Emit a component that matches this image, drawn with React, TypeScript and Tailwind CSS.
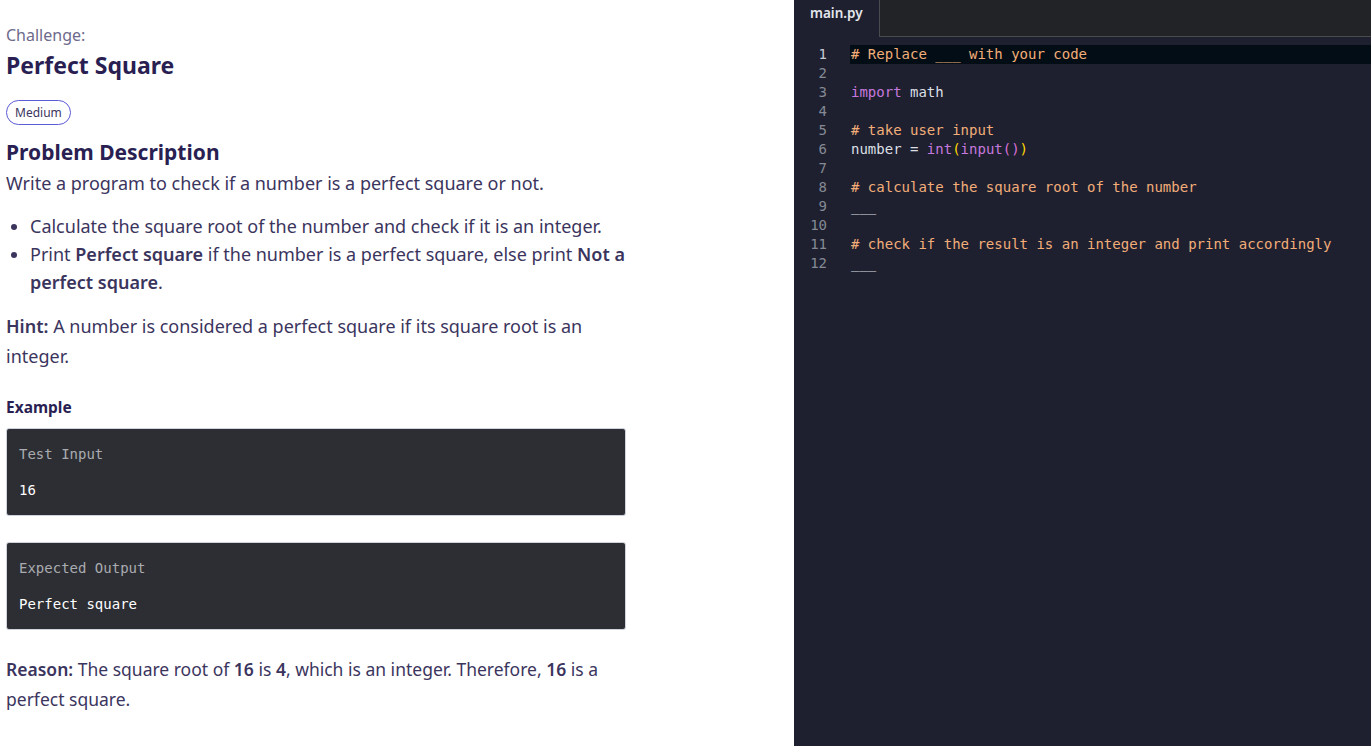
import React from "react";

const sans = { fontFamily: "'Noto Sans', Lato, sans-serif" };
const mono = { fontFamily: "'DejaVu Sans Mono', 'Liberation Mono', monospace" };

const C = "text-[#f2ad78]"; // comment
const K = "text-[#c679dd]"; // keyword / builtin
const T = "text-[#dcdfe4]"; // plain

type Tok = [string, string];

const lines: Tok[][] = [
  [["# Replace ___ with your code", C]],
  [],
  [["import", K], [" math", T]],
  [],
  [["# take user input", C]],
  [["number = ", T], ["int", K], ["(", "text-[#ffd700]"], ["input", K], ["()", "text-[#da70d6]"], [")", "text-[#ffd700]"]],
  [],
  [["# calculate the square root of the number", C]],
  [["___", T]],
  [],
  [["# check if the result is an integer and print accordingly", C]],
  [["___", T]],
];

function ExampleBox({ label, value }: { label: string; value: string }) {
  return (
    <div
      className="w-[620px] rounded-[3px] border border-[#cfd4dc] bg-[#2d2e33] px-[12px] pt-[15px] pb-[15px] text-[14px] leading-[20px]"
      style={mono}
    >
      <div className="text-[#a9abb0]">{label}</div>
      <div className="mt-[16px] text-white">{value}</div>
    </div>
  );
}

export default function App() {
  return (
    <div className="flex h-[746px] w-full overflow-hidden bg-white">
      {/* Problem statement */}
      <div className="w-[794px] shrink-0 px-[6px] pt-[23px] text-[#3b355e]" style={sans}>
        <div className="text-[16px] leading-[24px] text-[#6e6a8c]">Challenge:</div>
        <h1 className="mt-[2px] text-[23px] font-bold leading-[32px] text-[#2a1f52]">Perfect Square</h1>
        <span className="mt-[19px] inline-flex h-[25px] items-center rounded-full border border-[#5b5bd6] px-[8px] text-[12px] text-[#3b355e]">
          Medium
        </span>
        <h2 className="mt-[12px] text-[21px] font-bold leading-[30px] text-[#2a1f52]">Problem Description</h2>
        <p className="mt-[1px] text-[18px] leading-[30px]">
          Write a program to check if a number is a perfect square or not.
        </p>
        <ul className="mt-[14px] w-[650px] list-disc pl-[24px] text-[18px] leading-[28px]">
          <li>Calculate the square root of the number and check if it is an integer.</li>
          <li>
            Print <b className="font-semibold">Perfect square</b> if the number is a perfect square, else print{" "}
            <b className="font-semibold">Not a</b>
            <br />
            <b className="font-semibold">perfect square</b>.
          </li>
        </ul>
        <p className="mt-[15px] text-[18px] leading-[30px]">
          <b className="font-semibold">Hint:</b> A number is considered a perfect square if its square root is an
          <br />
          integer.
        </p>
        <div className="mt-[24px] text-[15.5px] font-bold leading-[24px] text-[#2a1f52]">Example</div>
        <div className="mt-[9px]">
          <ExampleBox label="Test Input" value="16" />
        </div>
        <div className="mt-[26px]">
          <ExampleBox label="Expected Output" value="Perfect square" />
        </div>
        <p className="mt-[24px] text-[17.5px] leading-[30px]">
          <b className="font-semibold">Reason:</b> The square root of <b className="font-semibold">16</b> is{" "}
          <b className="font-semibold">4</b>, which is an integer. Therefore, <b className="font-semibold">16</b> is a
          <br />
          perfect square.
        </p>
      </div>

      {/* Editor */}
      <div className="flex flex-1 flex-col bg-[#1e2030]">
        <div className="flex h-[37px] shrink-0">
          <div className="w-[85px] px-[16px] pt-[3px] text-[13.5px] font-semibold leading-[20px] text-[#e4e6ec]" style={sans}>
            main.py
          </div>
          <div className="flex-1 border-b border-l border-[#4a4b4f] bg-[#222326]" />
        </div>
        <div className="pt-[8px] text-[14px] leading-[19px]" style={mono}>
          {lines.map((toks, i) => (
            <div key={i} className="flex h-[19px]">
              <div className={`w-[33px] text-right ${i === 0 ? "text-[#c6cad2]" : "text-[#858a94]"}`}>{i + 1}</div>
              <div className={`ml-[23px] flex-1 whitespace-pre pl-[1px] ${i === 0 ? "bg-[#020d16]" : ""}`}>
                {toks.map(([t, c], j) => (
                  <span key={j} className={c}>
                    {t}
                  </span>
                ))}
              </div>
            </div>
          ))}
        </div>
      </div>
    </div>
  );
}
